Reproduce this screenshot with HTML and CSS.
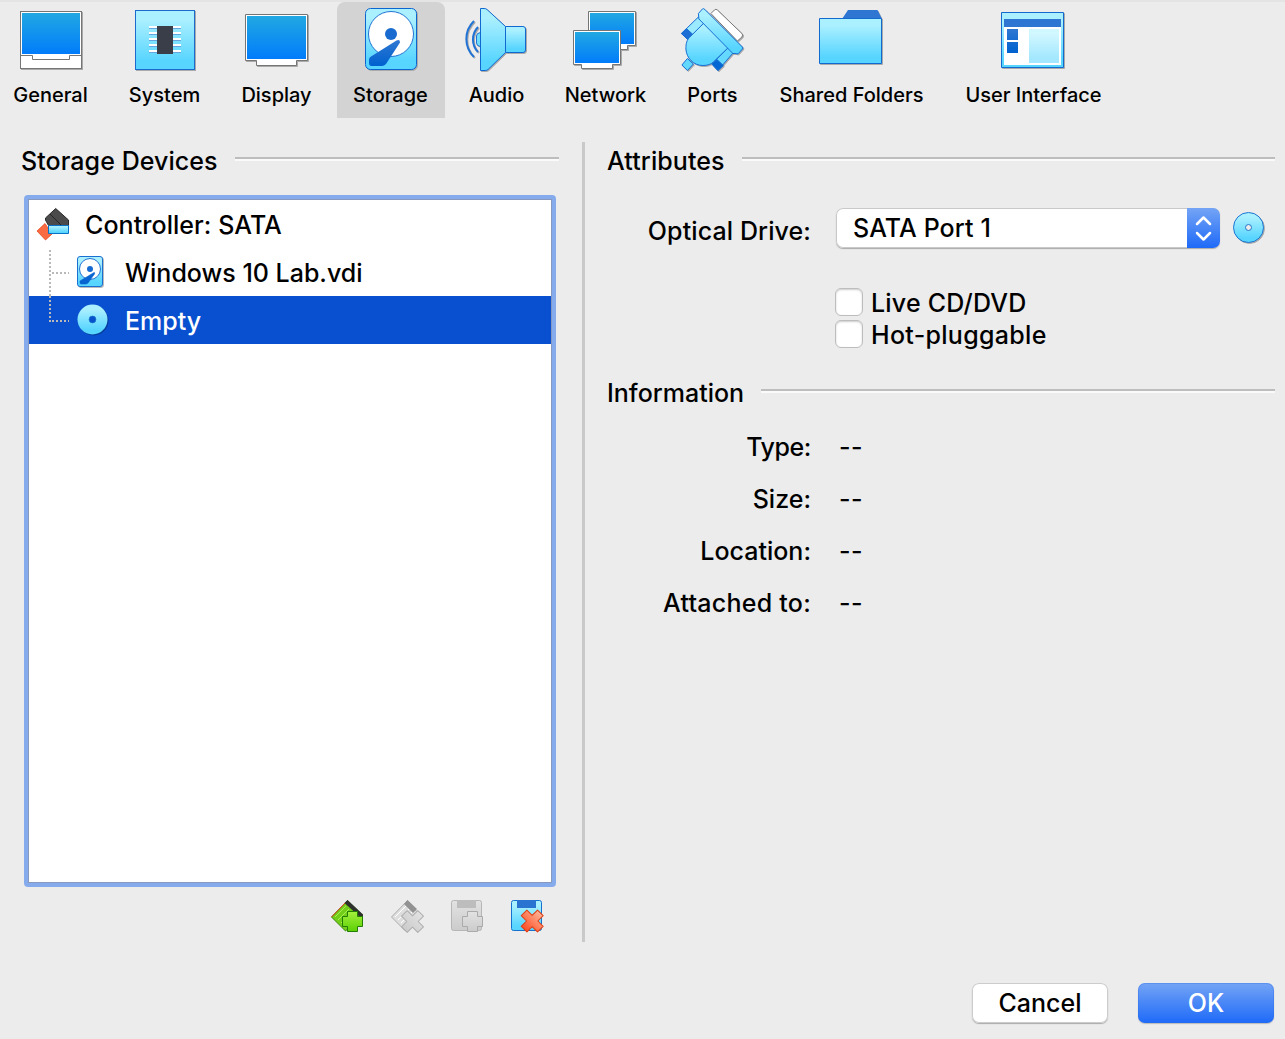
FILE: index.html
```html
<!DOCTYPE html>
<html lang="en">
<head>
<meta charset="utf-8">
<title>Storage Settings</title>
<link rel="stylesheet" href="styles.css">
</head>
<body>
<svg class="defs" width="0" height="0" aria-hidden="true">
  <defs>
    <linearGradient id="screen" x1="0" y1="0" x2="0" y2="1"><stop offset="0" stop-color="#21a8e2"/><stop offset="1" stop-color="#017cfb"/></linearGradient>
    <linearGradient id="cyan" x1="0" y1="0" x2="0" y2="1"><stop offset=".15" stop-color="#abf0ff"/><stop offset=".85" stop-color="#58d5ff"/></linearGradient>
    <linearGradient id="deep" x1="0" y1="0" x2="0" y2="1"><stop offset="0" stop-color="#2f78d2"/><stop offset="1" stop-color="#0061cf"/></linearGradient>
    <linearGradient id="green" x1="0" y1="0" x2="0" y2="1"><stop offset="0" stop-color="#a5f03c"/><stop offset="1" stop-color="#5bd005"/></linearGradient>
    <linearGradient id="red" x1="0" y1="0" x2="0" y2="1"><stop offset="0" stop-color="#ffb295"/><stop offset="1" stop-color="#fc4f26"/></linearGradient>
    <linearGradient id="grey" x1="0" y1="0" x2="0" y2="1"><stop offset="0" stop-color="#e2e2e2"/><stop offset="1" stop-color="#cbcbcb"/></linearGradient>
    <symbol id="disk" viewBox="0 0 52 62">
      <rect x=".5" y=".5" width="51" height="61" rx="5" fill="url(#cyan)" stroke="#0d66cf"/>
      <circle cx="26" cy="26" r="22.5" fill="#fff" stroke="#2474d3"/>
      <circle cx="26" cy="26" r="6" fill="#1a6bd0"/>
      <path d="M31.500 32.500 Q35 31 35 34.500 L21 56 Q19 58 17 58 H6.500 Q4 58 4 55 V51.500 Q4 49.500 6 48.500Z" fill="url(#deep)"/>
    </symbol>
  </defs>
</svg>
<div class="window">
  <nav class="toolbar">
    <a class="tab"><svg class="icon" viewBox="0 0 64 64"><rect x="1.500" y="3.500" width="61" height="57" fill="#fff" stroke="#757575"/><rect x="3" y="5" width="58" height="41" fill="url(#screen)"/><path d="M1 47.500H13.500V51.500H50.500V47.500H62" fill="none" stroke="#757575"/></svg><span>General</span></a>
    <a class="tab"><svg class="icon" viewBox="0 0 64 64"><rect x="2.500" y="2.500" width="59" height="59" fill="url(#cyan)" stroke="#1b6bcf"/><path d="M16 19H48M16 25H48M16 31H48M16 37H48M16 43H48" stroke="#fff" stroke-width="2"/><path d="M16 20.500H48M16 26.500H48M16 32.500H48M16 38.500H48M16 44.500H48" stroke="#66a6de"/><path d="M24 18h16v28h-16z" fill="#393e49"/></svg><span>System</span></a>
    <a class="tab"><svg class="icon" viewBox="0 0 64 64"><path d="M.5 6.500H62.500V52.500H51.500V57.500H11.500V52.500H.5Z" fill="#fff" stroke="#757575"/><rect x="2" y="8" width="59" height="43" fill="url(#screen)"/></svg><span>Display</span></a>
    <a class="tab active"><svg class="icon" viewBox="0 0 64 64"><use href="#disk" x="6" y="0" width="52" height="62"/></svg><span>Storage</span></a>
    <a class="tab"><svg class="icon" viewBox="1 0 64 64"><path d="M10 13A25 25 0 0 0 10 49M14 19A18 18 0 0 0 14 44" fill="none" stroke="#2173d5" stroke-width="2"/><path d="M16.500 24.500Q12.500 25 12.500 28V35Q12.500 38 16.500 38.500Z" fill="#70dcff" stroke="#2173d5"/><path d="M41.500 18.500H59Q61.500 18.500 61.500 21V42Q61.500 44.500 59 44.500H41.500Z" fill="url(#cyan)" stroke="#1068d0"/><path d="M16.500 .5H20Q22 .5 23 1.500L41.500 18.500V44.500L24 61.500Q23 62.500 21 62.500H16.500Z" fill="url(#cyan)" stroke="#1068d0"/></svg><span>Audio</span></a>
    <a class="tab"><svg class="icon" viewBox="0 0 64 64"><path d="M14.500 3.500H61.500V37.500H53.500V41.500H23.500V37.500H14.500Z" fill="#fff" stroke="#757575"/><path d="M16 5H60V36H16Z" fill="url(#screen)"/><path d="M-.5 22.500H46.500V56.500H38.500V60.500H7.500V56.500H-.5Z" fill="#fff" stroke="#757575"/><path d="M1 24H45V55H1Z" fill="url(#screen)"/></svg><span>Network</span></a>
    <a class="tab"><svg class="icon" viewBox=".6 0 64 64"><path d="M30.500 5.500L34 2Q35.500 .5 37 2L61.500 25.500Q63 27 61.500 29L57 33Z" fill="#fff" stroke="#777"/><g stroke="#176dd2" stroke-linejoin="round"><path d="M18 9L1 25.500L7.500 31.500L24.500 14Z" fill="#9beaff"/><path d="M6 20.500L1 25.500L7.500 31.500L12.500 26.500Z" fill="#1d6fd5"/><path d="M53.500 44L37.500 62.500L31.500 56L49.500 38Z" fill="#65d8ff"/><path d="M36.500 51.500L43 57.500L37.500 62.500L31.500 56Z" fill="#0567d3"/><path d="M7 50.500L1.500 57L7 62.500L13 56Z" fill="#62d8ff"/><path d="M24.500 14L9 29.500C5.500 33 5.500 38 5.500 41C6 50 13 57.500 22.500 57.500C27.500 57.500 31 56 33 54L49.500 38Z" fill="url(#cyan)"/><path d="M18 5.500L22 1Q23 0 24.500 1.500L62 39Q63 40 62 41L58 45.500Q56.500 46.500 55.500 45.500H52.500L18.500 11Z" fill="url(#cyan)"/></g></svg><span>Ports</span></a>
    <a class="tab"><svg class="icon" viewBox="0 0 64 64"><path d="M22 11L28 2H57.500L62 11Z" fill="#2f76d2"/><path d="M-.5 10.500H61.500V55.500H-.5Z" fill="url(#cyan)" stroke="#126ace"/></svg><span>Shared Folders</span></a>
    <a class="tab"><svg class="icon" viewBox="0 0 64 64"><path d="M-.5 4.500H61.500V59.500H-.5Z" fill="url(#cyan)" stroke="#126ace"/><path d="M2 11H59V57H2Z" fill="#fff"/><path d="M2 11H59V19H2Z" fill="#2f75d2"/><path d="M5 21H16V32H5ZM5 34H16V45H5Z" fill="url(#deep)"/><path d="M27 21H57V55H27Z" fill="url(#cyan)" opacity=".55"/></svg><span>User Interface</span></a>
  </nav>
  <main class="content">
    <section class="devices">
      <h2 class="heading"><span class="t-devices">Storage Devices</span></h2>
      <div class="tree">
        <div class="row root"><svg class="controller" viewBox="0 0 32 32"><path d="M0 23L8 15.500L15 26L8.500 32Z" fill="#f96b43" stroke="#df3c12" stroke-width=".7"/><path d="M18.700 .5L31.500 12V17.500H11.500L8.500 12V10Z" fill="#4b4b4b" stroke="#292929"/><path d="M13 6L24 17" stroke="#242424"/><path d="M11.500 17.500H31.500V25.500H11.500Z" fill="url(#cyan)" stroke="#0872c9"/></svg><span class="t-controller">Controller: SATA</span></div>
        <div class="row child"><svg class="branch" viewBox="0 0 20 48"><path d="M1 2V48M3 25H20" /></svg><svg class="drive" viewBox="0 0 32 32"><rect x=".5" y=".5" width="25" height="30" rx="2.500" fill="url(#cyan)" stroke="#1a70d2"/><circle cx="13" cy="13" r="10.500" fill="#fff" stroke="#2474d3"/><circle cx="13" cy="13" r="3" fill="#176ad0"/><path d="M17 16.500Q18 16 17.500 18L11 27Q10 28 8.500 28H4Q3 28 3 26.500V25Z" fill="#0963d0" stroke="#0963d0" stroke-width=".6"/></svg><span class="t-vdi">Windows 10 Lab.vdi</span></div>
        <div class="row child selected"><svg class="branch" viewBox="0 0 20 48"><path d="M1 0V26M3 25H20" /></svg><svg class="drive" viewBox="0 0 32 32"><circle cx="15.500" cy="15.500" r="15" fill="url(#cyan)"/><circle cx="15.500" cy="15.500" r="3.400" fill="#0751cc" stroke="#1475c9" stroke-width=".7"/></svg><span class="t-empty">Empty</span></div>
      </div>
      <div class="actions">
        <svg viewBox="0 0 32 32"><path d="M16.500 .5L.5 17L14.500 31L31.500 15Z" fill="#72ce18" stroke="#38860a"/><path d="M15 2L.5 17" stroke="#e14422"/><path d="M4 17L15 6M7 20L18 9M10 23L21 12M12 26L24 14" stroke="#a9ee52"/><path d="M16.500 0L32 14.500V17L29.500 17.500L13.500 3Z" fill="#2e302d"/><path d="M16.500 11.500H26.500V16.500H31.500V26.500H26.500V31.500H16.500V26.500H11.500V16.500H16.500Z" fill="url(#green)" stroke="#237d05"/></svg>
        <svg viewBox="0 0 32 32"><path d="M16.500 .5L.5 17L14.500 31L27 13Z" fill="#dedede" stroke="#adadad"/><path d="M4 17L15 6M7 20L18 9M10 23L21 12" stroke="#fff"/><path d="M16.500 0L26 9L22 13L13 4Z" fill="#929292"/><path transform="rotate(45 21.500 21.500)" d="M17.500 10H25.500V17.500H33V25.500H25.500V33H17.500V25.500H10V17.500H17.500Z" fill="url(#grey)" stroke="#aeaeae" stroke-linejoin="round"/></svg>
        <svg viewBox="0 0 32 32"><rect x=".5" y=".5" width="30" height="30" rx="2" fill="url(#grey)" stroke="#b6b6b6"/><path d="M6 0H25V8H6Z" fill="#bdbdbd"/><path d="M16.500 11.500H26.500V16.500H31.500V26.500H26.500V31.500H16.500V26.500H11.500V16.500H16.500Z" fill="url(#grey)" stroke="#aaa"/></svg>
        <svg viewBox="0 0 32 32"><rect x=".5" y=".5" width="30" height="30" rx="2" fill="url(#cyan)" stroke="#1570d0"/><path d="M6 0H25V8H6Z" fill="#2b73d0"/><path transform="rotate(45 21.200 21)" d="M17.200 9.500H25.200V17H32.700V25H25.200V32.500H17.200V25H9.700V17H17.200Z" fill="url(#red)" stroke="#df3d12" stroke-linejoin="round"/></svg>
      </div>
    </section>
    <div class="divider"></div>
    <section class="details">
      <h2 class="heading"><span class="t-attributes">Attributes</span></h2>
      <div class="drive-row">
        <span class="label"><span class="t-optical">Optical Drive:</span></span>
        <div class="select"><span class="t-port">SATA Port 1</span><svg class="arrows" viewBox="0 0 33 40"><path d="M10 16L16.500 9.500L23 16M10 25L16.500 31.500L23 25" fill="none" stroke="#fff" stroke-width="2.500" stroke-linecap="round" stroke-linejoin="round"/></svg></div>
        <svg class="disc" viewBox="0 0 32 32"><circle cx="15.500" cy="15.500" r="15" fill="url(#cyan)" stroke="#1b75d2"/><circle cx="15.500" cy="15.500" r="3" fill="#ececec" stroke="#2375c8"/></svg>
      </div>
      <div class="checks">
        <label class="check"><i></i><span class="t-live">Live CD/DVD</span></label>
        <label class="check"><i></i><span class="t-hot">Hot-pluggable</span></label>
      </div>
      <h2 class="heading info-heading"><span class="t-info">Information</span></h2>
      <dl class="info">
        <dt><span class="t-type">Type:</span></dt><dd>--</dd>
        <dt><span class="t-size">Size:</span></dt><dd>--</dd>
        <dt><span class="t-location">Location:</span></dt><dd>--</dd>
        <dt><span class="t-attached">Attached to:</span></dt><dd>--</dd>
      </dl>
    </section>
  </main>
  <footer class="footer"><button class="button">Cancel</button><button class="button primary">OK</button></footer>
</div>
</body>
</html>
```
FILE: styles.css
```css
* { box-sizing: border-box; }
body { margin: 0; background: #ececec; color: #000; font: 500 25px/32px Inter, "Liberation Sans", sans-serif; }
.defs { display: block; }
.window { width: 1285px; height: 1039px; display: flex; flex-direction: column; border-top: 2px solid #e4e4e4; overflow: hidden; }
span { white-space: nowrap; }
svg { display: block; overflow: visible; flex: none; }
.toolbar { display: grid; grid-template-columns: 102px 125px 99px 108px 103px 115px 99px 180px 184px; height: 116px; }
.toolbar { grid-template-columns: 102px 126px 98px 108px 104px 114px 100px 178px 186px; }
.tab { display: flex; flex-direction: column; align-items: center; padding-top: 6px; font-size: 20px; line-height: 26px; }
.tab span { margin-left: -1px; }
.tab:nth-child(n+4) { position: relative; left: 11px; }
.active { background: #d3d3d3; border-radius: 8px 8px 0 0; }
.icon { width: 64px; height: 64px; margin-bottom: 10px; filter: drop-shadow(1px 1px 0 #aaa); }
.content { display: flex; height: 824px; padding: 24px 10px 0 21px; }
.devices { width: 538px; }
.heading { display: flex; align-items: center; gap: 17px; margin: 0; height: 38px; font: inherit; }
.heading::after { content: ""; flex: 1; margin-bottom: 4px; border-top: 2px solid #bdbdbd; border-bottom: 2px solid #fafafa; }
.t-devices { letter-spacing: .07px; }
.t-attributes { letter-spacing: .1px; }
.tree { width: 532px; height: 692px; margin: 15px 0 0 3px; padding: 1px; background: #fff; border: 4px solid #86abed; border-radius: 4px; box-shadow: inset 0 0 0 1px #8799bd; }
.row { display: flex; align-items: center; height: 48px; padding-left: 20px; }
.root { padding: 3px 0 0 8px; }
.controller { width: 32px; height: 32px; margin: -4px 16px 0 0; }
.branch { width: 20px; height: 48px; margin-right: 8px; }
.branch path { fill: none; stroke: #b9b9b9; stroke-width: 2; stroke-dasharray: 2 2; }
.drive { width: 32px; height: 32px; margin-right: 16px; filter: drop-shadow(1px 1px 0 #0004); }
.row > span { padding-top: 2px; }
.root > .t-controller { padding: 0 0 2px; letter-spacing: .06px; }
.selected { background: #0850d0; color: #fff; }
.actions { display: flex; gap: 28px; padding: 13px 0 0 310px; }
.actions svg { width: 32px; height: 32px; }
.divider { width: 3px; height: 800px; margin-left: 23px; background: #c9c9c9; }
.details { flex: 1; margin-left: 22px; }
.drive-row { display: grid; grid-template-columns: 204px 384px 32px; column-gap: 13px; margin-top: 28px; align-items: center; }
.label { text-align: right; padding-top: 5px; }
.t-optical { letter-spacing: .1px; }
.select { display: flex; justify-content: space-between; align-items: center; height: 40px; margin-left: 12px; width: 384px; padding-left: 17px; background: #fff; border-radius: 7px; box-shadow: inset 0 0 0 1px #c9c9c9, 0 1px 1px #aaa; }
.t-port { letter-spacing: .1px; }
.arrows { width: 33px; height: 40px; background: linear-gradient(#74a4f5, #1e6af8); border-radius: 0 7px 7px 0; }
.disc { width: 32px; height: 32px; margin-left: 12px; filter: drop-shadow(1px 1px 0 #aaa); }
.checks { margin: 38px 0 0 228px; }
.check { display: flex; gap: 8px; height: 32px; }
.check span { padding-top: 1px; }
.t-live { letter-spacing: .2px; }
.t-hot { letter-spacing: .3px; }
.check i { width: 28px; height: 28px; margin-top: 2px; background: #fff; border: 1px solid #bdbdbd; border-radius: 6px; box-shadow: inset 0 1px 2px #ccc; }
.info-heading { margin-top: 24px; }
.info { display: grid; grid-template-columns: 204px 1fr; column-gap: 28px; grid-auto-rows: 52px; margin: 9px 0 0; align-items: center; }
.info dt { text-align: right; }
.info dd { margin: 0; letter-spacing: .5px; }
.t-type { letter-spacing: -.4px; }
.t-attached { letter-spacing: .25px; }
.footer { display: flex; gap: 30px; justify-content: flex-end; padding: 41px 11px 0 0; }
.button { width: 136px; height: 40px; border: 0; border-radius: 7px; background: #fff; font: inherit; color: #000; box-shadow: inset 0 0 0 1px #ccc, 0 1px 1px #aaa; padding: 0; }
.primary { color: #fff; background: linear-gradient(#74a4f5, #1e6af8); box-shadow: inset 0 0 0 1px #2f70e855, 0 1px 1px #bbb; }
```
